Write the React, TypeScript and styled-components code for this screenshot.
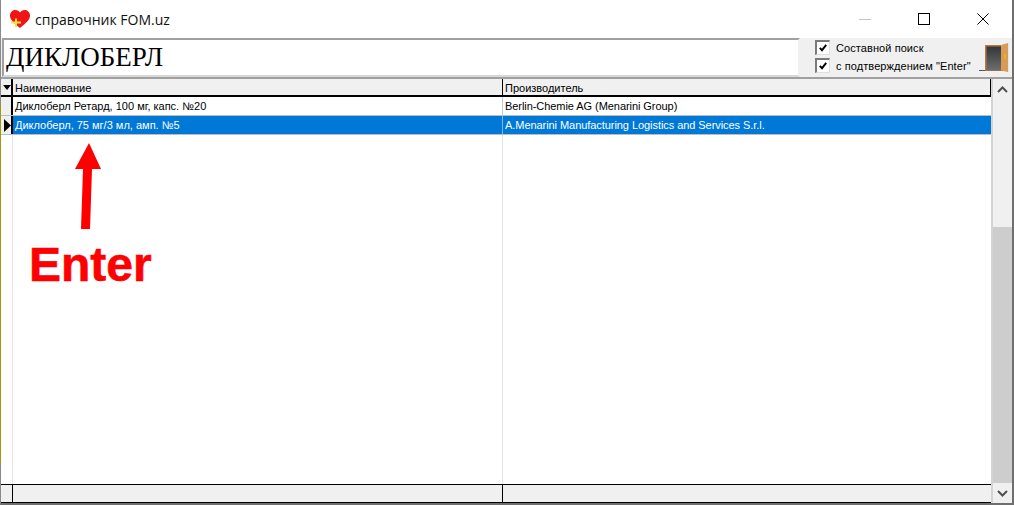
import React from "react";
import styled, { createGlobalStyle } from "styled-components";

const Global = createGlobalStyle`
  html, body { margin: 0; padding: 0; background: #fff; overflow: hidden; }
  * { box-sizing: border-box; }
`;

const Window = styled.div`
  position: relative;
  width: 1014px;
  height: 505px;
  display: flex;
  flex-direction: column;
  background: #fff;
  border-left: 1px solid #8a8a8a;
  border-right: 2px solid #6f6f6f;
  border-bottom: 2px solid #6f6f6f;
  font-family: "Liberation Sans", Arial, sans-serif;
  font-size: 11px;
  color: #000;
`;

const EdgeTint = styled.div`
  position: absolute;
  left: -1px;
  top: 105px;
  width: 1px;
  height: 358px;
  background: #a09a10;
`;

const TitleBar = styled.div`
  height: 38px;
  flex: none;
  display: flex;
  align-items: center;
  padding-left: 9px;
`;

const TitleText = styled.span`
  margin-left: 5px;
  font-family: "Open Sans", sans-serif;
  font-size: 14px;
  color: #111;
`;

const Controls = styled.div`
  margin-left: auto;
  display: flex;
  height: 100%;
`;

const ControlButton = styled.div`
  width: 59px;
  display: flex;
  align-items: center;
  justify-content: center;
`;

const SearchRow = styled.div`
  height: 41px;
  flex: none;
  display: flex;
  background: #f0f0f0;
  border-bottom: 2px solid #a0a0a0;
`;

const SearchInput = styled.div`
  width: 798px;
  margin-left: 1px;
  height: 39px;
  background: #fff;
  border: 2px solid;
  border-color: #a0a0a0 #f0f0f0 #d8d8d8 #a0a0a0;
  font-family: "Liberation Serif", serif;
  font-size: 27px;
  line-height: 34px;
  padding-left: 2px;
`;

const Options = styled.div`
  flex: 1;
  display: flex;
  padding-left: 15px;
`;

const OptionList = styled.div`
  display: flex;
  flex-direction: column;
  padding-top: 2px;
  gap: 3px;
`;

const OptionRow = styled.div`
  display: flex;
  align-items: center;
  height: 15px;
  gap: 6px;
  white-space: nowrap;
  letter-spacing: 0.08px;
`;

const CheckBox = styled.div`
  width: 15px;
  height: 15px;
  flex: none;
  background: #fff;
  border-style: solid;
  border-width: 2px 1px 1px 2px;
  border-color: #7a7a7a #e0e0e0 #e0e0e0 #7a7a7a;
  display: flex;
  align-items: center;
  justify-content: center;
`;

const DoorBox = styled.div`
  margin-left: auto;
  margin-top: 4px;
`;

const Grid = styled.div`
  flex: 1;
  display: flex;
  min-height: 0;
`;

const Table = styled.div`
  flex: 1;
  display: flex;
  flex-direction: column;
  min-width: 0;
`;

const HeaderRow = styled.div`
  height: 18px;
  flex: none;
  display: grid;
  grid-template-columns: 12px 490px 1fr;
  background: #f0f0f0;
  border-bottom: 2px solid #000;
`;

const HeaderCell = styled.div`
  border-right: 1px solid #000;
  padding: 1px 0 0 2px;
  white-space: nowrap;
  display: flex;
  align-items: center;
`;

const IndicatorHead = styled(HeaderCell)`
  padding: 0 0 0 2px;
  border-right: 2px solid #000;
`;

const Body = styled.div`
  flex: 1;
  display: flex;
  flex-direction: column;
  position: relative;
  min-height: 0;
`;

const DataRow = styled.div<{ $selected?: boolean }>`
  height: 19px;
  flex: none;
  display: grid;
  grid-template-columns: 12px 490px 1fr;
  background: ${(p) => (p.$selected ? "#0078d7" : "#fff")};
  color: ${(p) => (p.$selected ? "#fff" : "#000")};
  border-bottom: 1px solid #bdbdbd;
`;

const Indicator = styled.div`
  background: #f0f0f0;
  border-right: 2px solid #000;
  display: flex;
  align-items: center;
  padding-left: 3px;
`;

const Cell = styled.div<{ $selected?: boolean }>`
  padding-left: 2px;
  line-height: 18px;
  white-space: nowrap;
  border-right: 1px solid ${(p) => (p.$selected ? "#7fb7e8" : "#c8c8c8")};
`;

const MakerCell = styled(Cell)`
  letter-spacing: -0.06px;
  border-right: none;
`;

const Filler = styled.div`
  flex: 1;
  display: grid;
  grid-template-columns: 12px 490px 1fr;
`;

const FillerCell = styled.div`
  border-right: 1px solid #e4e4e4;
`;

const Footer = styled.div`
  height: 19px;
  flex: none;
  display: grid;
  grid-template-columns: 12px 490px 1fr;
  background: #f0f0f0;
  border-top: 1px solid #000;
  border-bottom: 1px solid #000;
`;

const FooterCell = styled.div`
  border-right: 1px solid #000;
`;

const Scrollbar = styled.div`
  width: 21px;
  flex: none;
  display: flex;
  flex-direction: column;
  background: #f0f0f0;
  border-left: 2px solid #d4d4d4;
`;

const ScrollButton = styled.div`
  height: 20px;
  flex: none;
  display: flex;
  align-items: center;
  justify-content: center;
`;

const ScrollSpace = styled.div`
  height: 128px;
  flex: none;
`;

const ScrollThumb = styled.div`
  flex: 1;
  background: #cdcdcd;
`;

const Annotation = styled.div`
  position: absolute;
  left: 28px;
  top: 140px;
  font-weight: 700;
  font-size: 48px;
  line-height: 56px;
  color: #ff0000;
  -webkit-text-stroke: 0.6px #ff0000;
`;

const ArrowMark = styled.svg`
  position: absolute;
  left: 69px;
  top: 46px;
`;

const Check = () => (
  <svg width="8" height="8" viewBox="0 0 8 8">
    <path d="M0.8 3.8 L3 6.2 L7.2 0.8" fill="none" stroke="#000" strokeWidth="1.9" />
  </svg>
);

const Heart = () => (
  <svg width="20" height="19" viewBox="0 0 20 19">
    <path d="M10 18 C4 13 0 10 0 5.5 C0 2 3 0 5.5 0 C7.5 0 9 1 10 2.5 C11 1 12.5 0 14.5 0 C17 0 20 2 20 5.5 C20 10 16 13 10 18 Z" fill="#f01414" />
    <path d="M6 8.5 V17 M1 12.5 H11" stroke="#f6e23a" strokeWidth="2" />
  </svg>
);

const Door = () => (
  <svg width="34" height="32" viewBox="0 0 34 32">
    <defs>
      <linearGradient id="doorDark" x1="0" y1="0" x2="0" y2="1">
        <stop offset="0" stopColor="#33363a" />
        <stop offset="1" stopColor="#6e6e6e" />
      </linearGradient>
    </defs>
    <path d="M1 28.5 H26" stroke="#555" strokeWidth="1" />
    <rect x="7" y="3" width="17" height="26" fill="#b57a3a" />
    <rect x="8.5" y="4.5" width="14.5" height="24" fill="url(#doorDark)" />
    <path d="M23 3 L30 1 V30 L23 28.5 Z" fill="#d99a55" />
    <rect x="26" y="12" width="2" height="5" fill="#e8b020" />
    <path d="M30.5 1 V30" stroke="#e4e4e4" strokeWidth="1" />
  </svg>
);

const Chevron = ({ up }: { up?: boolean }) => (
  <svg width="11" height="7" viewBox="0 0 11 7">
    <path d={up ? "M1 6 L5.5 1.5 L10 6" : "M1 1 L5.5 5.5 L10 1"} fill="none" stroke="#505050" strokeWidth="2" />
  </svg>
);

export default function App() {
  return (
    <Window>
      <Global />
      <EdgeTint />
      <TitleBar>
        <Heart />
        <TitleText>справочник FOM.uz</TitleText>
        <Controls>
          <ControlButton>
            <svg width="12" height="1"><rect width="12" height="1" fill="#c4c4c4" /></svg>
          </ControlButton>
          <ControlButton>
            <svg width="12" height="12"><rect x="0.5" y="0.5" width="11" height="11" fill="none" stroke="#000" /></svg>
          </ControlButton>
          <ControlButton>
            <svg width="12" height="12"><path d="M0.5 0.5 L11.5 11.5 M11.5 0.5 L0.5 11.5" stroke="#000" fill="none" /></svg>
          </ControlButton>
        </Controls>
      </TitleBar>
      <SearchRow>
        <SearchInput>ДИКЛОБЕРЛ</SearchInput>
        <Options>
          <OptionList>
            <OptionRow><CheckBox><Check /></CheckBox>Составной поиск</OptionRow>
            <OptionRow><CheckBox><Check /></CheckBox>с подтверждением "Enter"</OptionRow>
          </OptionList>
          <DoorBox><Door /></DoorBox>
        </Options>
      </SearchRow>
      <Grid>
        <Table>
          <HeaderRow>
            <IndicatorHead>
              <svg width="8" height="5"><path d="M0 0 H8 L4 5 Z" fill="#000" /></svg>
            </IndicatorHead>
            <HeaderCell>Наименование</HeaderCell>
            <HeaderCell>Производитель</HeaderCell>
          </HeaderRow>
          <Body>
            <DataRow>
              <Indicator />
              <Cell>Диклоберл Ретард, 100 мг, капс. №20</Cell>
              <MakerCell>Berlin-Chemie AG (Menarini Group)</MakerCell>
            </DataRow>
            <DataRow $selected>
              <Indicator>
                <svg width="7" height="13"><path d="M0 0 L7 6.5 L0 13 Z" fill="#000" /></svg>
              </Indicator>
              <Cell $selected>Диклоберл, 75 мг/3 мл, амп. №5</Cell>
              <MakerCell $selected>A.Menarini Manufacturing Logistics and Services S.r.l.</MakerCell>
            </DataRow>
            <Filler>
              <FillerCell />
              <FillerCell />
              <div />
            </Filler>
            <Annotation>Enter</Annotation>
            <ArrowMark width="32" height="90" viewBox="0 0 32 90">
              <path d="M19 0 L31 26 H22 L20 86 H11 L13 26 H5 Z" fill="#ff0000" />
            </ArrowMark>
          </Body>
          <Footer>
            <FooterCell />
            <FooterCell />
            <div />
          </Footer>
        </Table>
        <Scrollbar>
          <ScrollButton><Chevron up /></ScrollButton>
          <ScrollSpace />
          <ScrollThumb />
          <ScrollButton><Chevron /></ScrollButton>
        </Scrollbar>
      </Grid>
    </Window>
  );
}
